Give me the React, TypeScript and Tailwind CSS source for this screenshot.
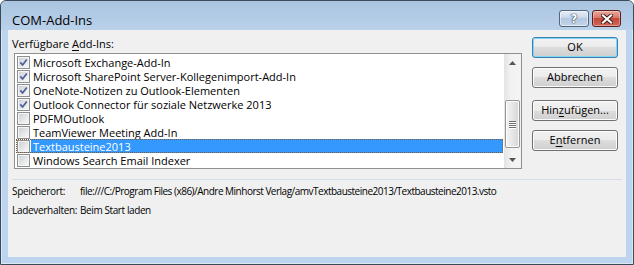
import React from "react";

type AddIn = { label: string; checked: boolean; selected?: boolean };

const ADD_INS: AddIn[] = [
  { label: "Microsoft Exchange-Add-In", checked: true },
  { label: "Microsoft SharePoint Server-Kollegenimport-Add-In", checked: true },
  { label: "OneNote-Notizen zu Outlook-Elementen", checked: true },
  { label: "Outlook Connector für soziale Netzwerke 2013", checked: true },
  { label: "PDFMOutlook", checked: false },
  { label: "TeamViewer Meeting Add-In", checked: false },
  { label: "Textbausteine2013", checked: false, selected: true },
  { label: "Windows Search Email Indexer", checked: false },
];

const BTN =
  "flex h-[21px] w-full items-center justify-center rounded-[3px] border bg-[linear-gradient(#f2f2f2_0%,#ebebeb_50%,#dddddd_50%,#cfcfcf_100%)] text-[11px] text-black";

function CheckBox({ checked }: { checked: boolean }) {
  return (
    <span className="flex h-[13px] w-[13px] shrink-0 items-center justify-center border border-[#8e8f8f] bg-[#f4f4f4]">
      <span className="flex h-[9px] w-[9px] items-center justify-center bg-[linear-gradient(135deg,#cfd2d6,#f7f7f7)]">
        {checked && (
          <svg width="9" height="9" viewBox="0 0 9 9">
            <path d="M1.3 4.4 L3.6 7 L7.8 1.4" fill="none" stroke="#4a5e9c" strokeWidth="1.7" />
          </svg>
        )}
      </span>
    </span>
  );
}

function ListRow({ item }: { item: AddIn }) {
  return (
    <div className="relative mx-[1px] flex h-[14px] items-center">
      <span className="ml-[1px]">
        <CheckBox checked={item.checked} />
      </span>
      <span
        className={
          "ml-[1px] flex h-full flex-1 items-center pl-[2px] leading-none whitespace-nowrap " +
          (item.selected ? "bg-[#3399ff] text-white" : "text-black")
        }
      >
        {item.label}
      </span>
      {item.selected && (
        <span className="pointer-events-none absolute inset-0 border border-dotted border-[#7a5a3a]" />
      )}
    </div>
  );
}

function ScrollBar() {
  return (
    <div className="flex w-[17px] flex-col bg-[linear-gradient(90deg,#e3e3e3,#f2f2f2_40%,#f4f4f4)]">
      <div className="flex h-[17px] items-center justify-center">
        <svg width="7" height="4" viewBox="0 0 7 4">
          <path d="M0 4 L3.5 0 L7 4 Z" fill="#555" />
        </svg>
      </div>
      <div className="flex-1">
        <div className="mx-[1px] mt-[29px] flex h-[48px] items-center justify-center rounded-[2px] border border-[#979797] bg-[linear-gradient(90deg,#f4f4f4,#e6e6e6_50%,#d6d6d6)] shadow-[inset_0_0_0_1px_#fbfbfb]">
          <div className="flex flex-col gap-[1px]">
            {[0, 1, 2, 3].map((i) => (
              <span key={i} className="block h-[1px] w-[7px] bg-[#6e6e6e] shadow-[0_1px_0_#ffffff]" />
            ))}
          </div>
        </div>
      </div>
      <div className="flex h-[17px] items-center justify-center">
        <svg width="7" height="4" viewBox="0 0 7 4">
          <path d="M0 0 L3.5 4 L7 0 Z" fill="#555" />
        </svg>
      </div>
    </div>
  );
}

function CaptionButtons() {
  return (
    <div className="mr-[12px] mt-[9px] flex gap-[3px] self-start">
      <div className="flex h-[17px] w-[30px] items-center justify-center rounded-[3px] border border-[#52667e] bg-[linear-gradient(#e4edf7_0%,#cad9ea_45%,#b3c7df_50%,#c4d6ea_100%)] shadow-[inset_0_0_0_1px_rgba(255,255,255,0.5)]">
        <span className="font-['DejaVu_Sans',sans-serif] text-[12px] leading-none font-bold text-white [text-shadow:0_0_1px_#2b3a4f,0_0_1px_#2b3a4f,0_0_1px_#2b3a4f]">
          ?
        </span>
      </div>
      <div className="flex h-[17px] w-[29px] items-center justify-center rounded-[3px] border border-[#5a1f1a] bg-[linear-gradient(#e8a89d_0%,#d7796b_45%,#c4483a_50%,#d2685b_100%)] shadow-[inset_0_0_0_1px_rgba(255,255,255,0.35)]">
        <svg width="12" height="10" viewBox="0 0 12 10">
          <path d="M2 1.5 L10 8.5 M10 1.5 L2 8.5" stroke="#3b1510" strokeWidth="4" strokeLinecap="square" />
          <path d="M2 1.5 L10 8.5 M10 1.5 L2 8.5" stroke="#ffffff" strokeWidth="2.2" strokeLinecap="square" />
        </svg>
      </div>
    </div>
  );
}

export default function App() {
  return (
    <div className="h-[265px] w-[634px] bg-white font-['Open_Sans','Segoe_UI',sans-serif]">
      <div className="flex h-[265px] w-[634px] flex-col rounded-t-[6px] border border-[#3b4a5a] bg-[#bcd4ed] shadow-[inset_0_0_0_1px_rgba(255,255,255,0.45)]">
        <div className="flex h-[29px] items-start rounded-t-[6px] bg-[linear-gradient(#aac4e0,#bad1ea)]">
          <span className="ml-[11px] mt-[10px] text-[13px] leading-[18px] text-black">COM-Add-Ins</span>
          <div className="ml-auto flex">
            <CaptionButtons />
          </div>
        </div>

        <div className="mx-[7px] flex h-[227px] flex-col bg-[#f0f0f0] px-[4px] text-[11px] text-black">
          <div className="flex">
            <div className="flex flex-col">
              <div className="mt-[6px] h-[16px] leading-[16px]">
                Verfügbare <span className="underline underline-offset-2">A</span>dd-Ins:
              </div>
              <div className="ml-[2px] mt-[1px] flex h-[116px] w-[508px] border border-[#8e8f8f] bg-white">
                <div className="flex flex-1 flex-col pt-[1px]">
                  {ADD_INS.map((item) => (
                    <ListRow key={item.label} item={item} />
                  ))}
                </div>
                <ScrollBar />
              </div>
            </div>
            <div className="ml-[10px] mr-[4px] flex w-[86px] flex-col pt-[7px]">
              <button className={BTN + " border-[#3c7fb1] shadow-[inset_0_0_0_1px_#7fd6f7]"}>OK</button>
              <button className={BTN + " mt-[9px] border-[#707070] shadow-[inset_0_0_0_1px_#fcfcfc]"}>
                Abbrechen
              </button>
              <button className={BTN + " mt-[12px] border-[#707070] shadow-[inset_0_0_0_1px_#fcfcfc]"}>
                <span>
                  Hin<span className="underline underline-offset-2">z</span>ufügen...
                </span>
              </button>
              <button className={BTN + " mt-[9px] border-[#707070] shadow-[inset_0_0_0_1px_#fcfcfc]"}>
                <span>
                  E<span className="underline underline-offset-2">n</span>tfernen
                </span>
              </button>
            </div>
          </div>

          <div className="mt-[10px] border-t border-[#d5dde6]" />
          <div className="mt-[2px] flex h-[19px] items-center text-[10px]">
            <span className="w-[68px] shrink-0 tracking-[-0.3px]">Speicherort:</span>
            <span className="whitespace-nowrap tracking-[-0.5px]">
              file:///C:/Program Files (x86)/Andre Minhorst Verlag/amvTextbausteine2013/Textbausteine2013.vsto
            </span>
          </div>
          <div className="flex h-[19px] items-center text-[10px]">
            <span className="w-[68px] shrink-0 tracking-[-0.3px]">Ladeverhalten:</span>
            <span className="whitespace-nowrap tracking-[-0.4px]">Beim Start laden</span>
          </div>
        </div>
      </div>
    </div>
  );
}
